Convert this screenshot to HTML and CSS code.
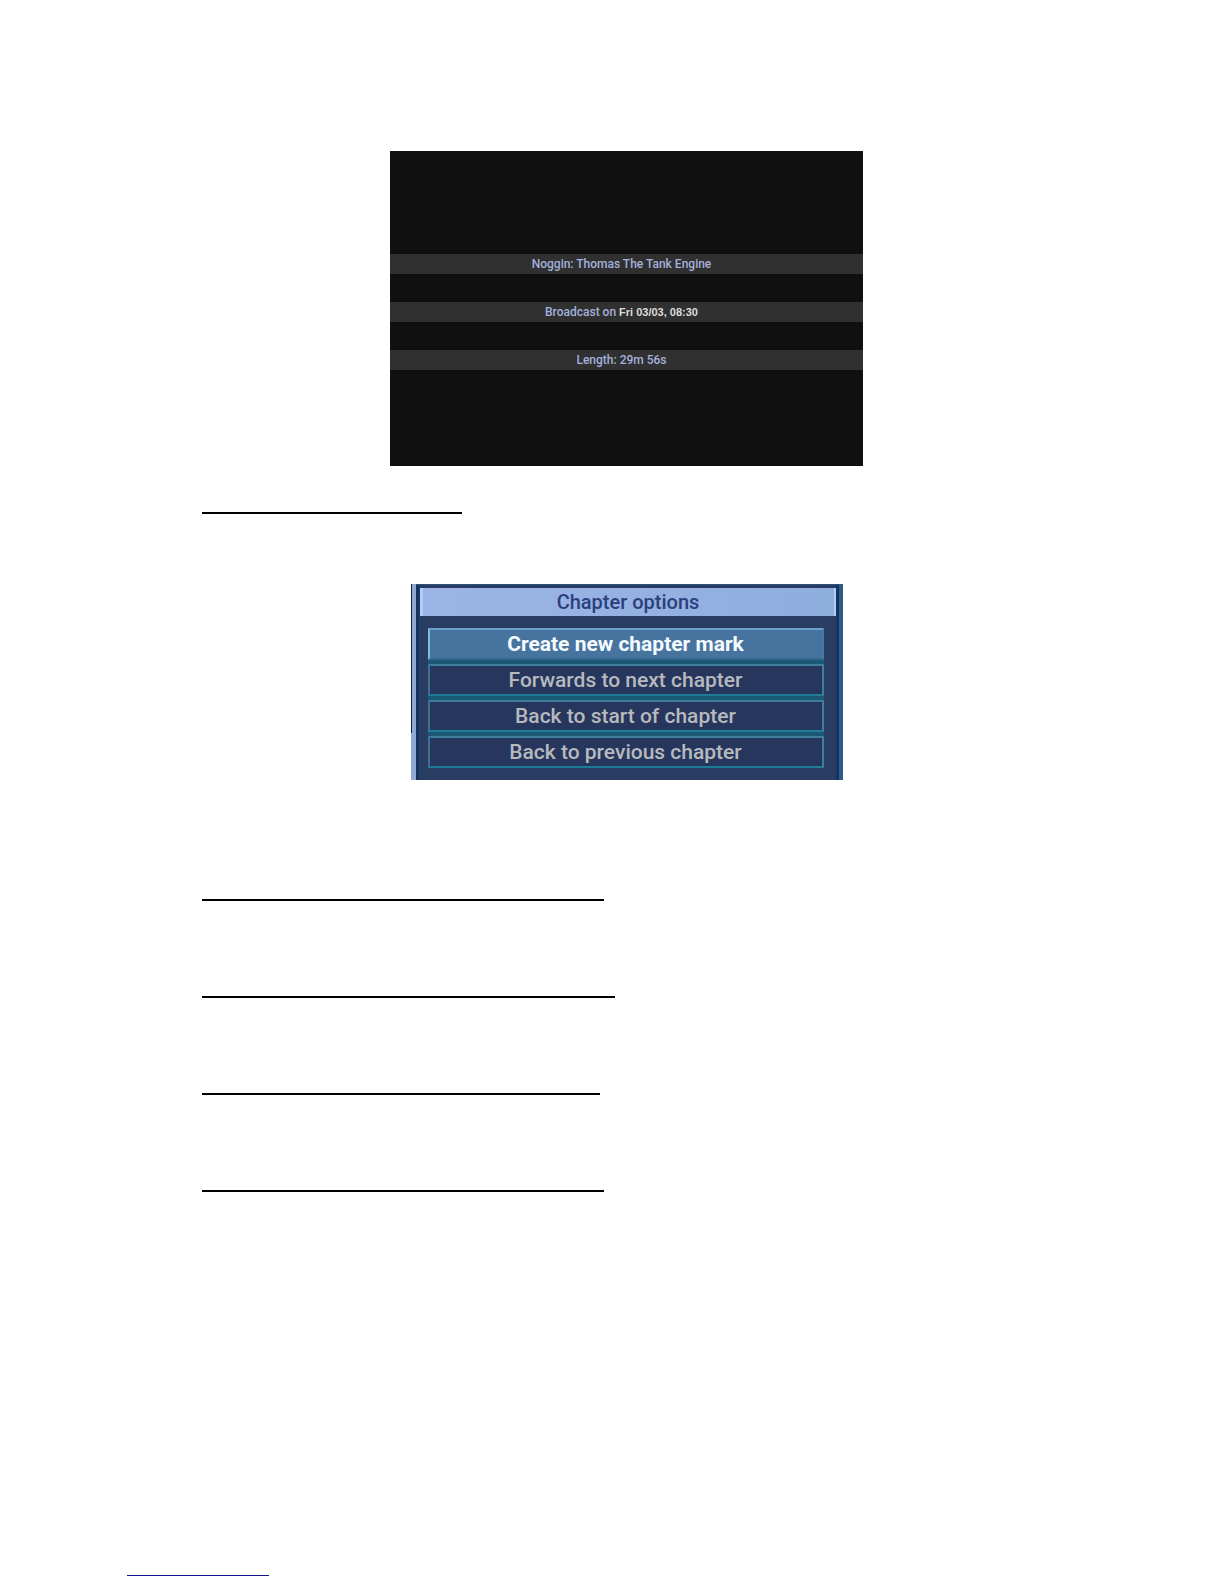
FILE: index.html
```
<!DOCTYPE html>
<html lang="en">
<head>
	<meta charset="UTF-8">
	<title>Chapter options</title>
	<link rel="stylesheet" href="styles.css">
</head>
<body>
	<main>
		<section class="screen">
			<p>Noggin: Thomas The Tank Engine</p>
			<p>Broadcast on <time>Fri 03/03, 08:30</time></p>
			<p>Length: 29m 56s</p>
		</section>
		<hr class="rule first">
		<section class="panel">
			<div class="panel-body">
				<h2>Chapter options</h2>
				<nav class="options">
					<button class="selected">Create new chapter mark</button>
					<button>Forwards to next chapter</button>
					<button>Back to start of chapter</button>
					<button>Back to previous chapter</button>
				</nav>
			</div>
		</section>
		<div class="rules">
			<hr class="rule">
			<hr class="rule long">
			<hr class="rule short">
			<hr class="rule">
		</div>
	</main>
	<footer>
		<hr class="link-line">
	</footer>
</body>
</html>
```
FILE: styles.css
```
* {margin:0;padding:0;box-sizing:border-box;}
body {display:flex;flex-flow:column nowrap;min-height:100vh;background-color:#fff;}
main {flex:1 0 auto;display:flex;flex-flow:column nowrap;padding:151px 173px 0 202px;}
footer {flex:0 0 auto;padding:0 127px 8px;}

.screen {align-self:center;display:flex;flex-flow:column nowrap;gap:28px;width:100%;max-width:473px;padding:103px 0 96px;background-color:#101010;}
.screen > p {height:20px;padding-right:10px;background-color:#303030;color:#a3b0dc;font:500 12px/20px Roboto,sans-serif;text-align:center;}
.screen time {color:#dcdcdc;font:bold 11px/20px "Liberation Sans",sans-serif;}

.rule {width:100%;max-width:402px;height:2px;border:none;background-color:#000;}
.rule.first {max-width:260px;margin:46px 0 70px;}
.rule.long {max-width:413px;}
.rule.short {max-width:398px;}
.rules {display:flex;flex-flow:column nowrap;gap:95px;padding-top:119px;}
.link-line {width:142px;height:1px;border:none;background-color:#16168c;}

.panel {align-self:center;width:100%;max-width:432px;padding:0 4px 0 5px;background:linear-gradient(#14223f,#14223f) left top/1px 76% no-repeat,linear-gradient(to right,#8fa9d2 50%,#2f5c86 50%);}
.panel-body {padding:3px 3px 12px 4px;background-color:#293d62;border-top:1px solid #2c5279;box-shadow:inset 3px 0 #143461,inset -3px 0 #143461;}
.panel h2 {border-left:3px solid #b0cdf5;border-right:2px solid #b0cdf5;background:linear-gradient(to right,#9cb4e6,#8eaede);color:#2c3f7c;font:500 20px/28px Roboto,sans-serif;text-align:center;}
.options {display:flex;flex-flow:column nowrap;gap:4px;margin:12px 12px 0 8px;background-color:#1b5875;}
.options > button {height:32px;border:2px solid;border-color:#3f7c9c #3b7f9d #1d7d94 #3f7191;background-color:#27365d;color:#b6babd;font:500 21px/28px Roboto,sans-serif;text-align:center;cursor:pointer;}
.options > .selected {border-color:#6b9ecb #437a9f #34688c #83b8e3;background-color:#47749f;color:#f4fbff;font-weight:bold;}
.options > button:hover {filter:brightness(1.1);}
```
